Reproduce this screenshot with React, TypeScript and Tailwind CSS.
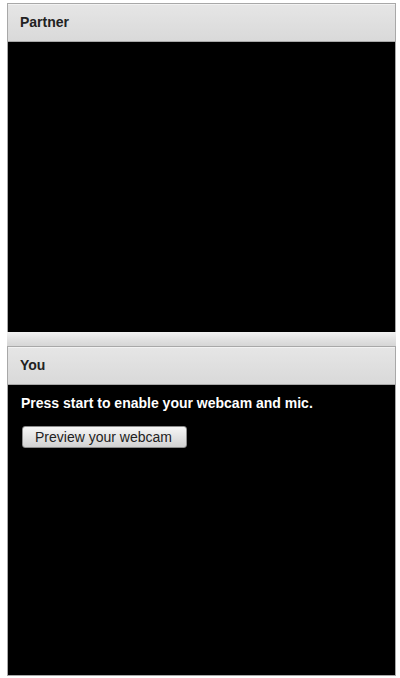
import React from 'react';

const font = { fontFamily: '"Liberation Sans", Arial, sans-serif' };

const PanelHeader: React.FC<{ title: string }> = ({ title }) => (
  <div className="h-[38px] flex items-center pl-[12px] bg-gradient-to-b from-[#e6e6e6] to-[#d9d9d9] border-b border-[#a9a9a9] shadow-[inset_0_1px_0_#f2f2f2]">
    <span className="text-[14px] font-bold text-[#222]">{title}</span>
  </div>
);

const App: React.FC = () => {
  return (
    <div className="w-[400px] h-[678px] bg-white overflow-hidden" style={font}>
      <div className="ml-[7px] w-[389px] pt-[3px]">
        {/* partner panel */}
        <div className="border border-[#a8a8a8] border-b-0">
          <PanelHeader title="Partner" />
          <div className="h-[290px] bg-black" />
        </div>

        <div className="h-[14px] bg-gradient-to-b from-[#f2f2f2] via-[#e2e2e2] to-[#d6d6d6]" />

        {/* you panel */}
        <div className="border border-[#a8a8a8]">
          <PanelHeader title="You" />
          <div className="h-[290px] bg-black pl-[13px] pt-[10px]">
            <p className="text-[14px] leading-[16px] font-bold text-white">
              Press start to enable your webcam and mic.
            </p>
            <button className="mt-[15px] ml-px h-[22px] pl-[12px] pr-[14px] text-[14px] leading-[20px] text-[#222] rounded-[3px] border border-[#8c8c8c] bg-gradient-to-b from-[#f6f6f6] to-[#d2d2d2]">
              Preview your webcam
            </button>
          </div>
        </div>
      </div>
    </div>
  );
};

export default App;
